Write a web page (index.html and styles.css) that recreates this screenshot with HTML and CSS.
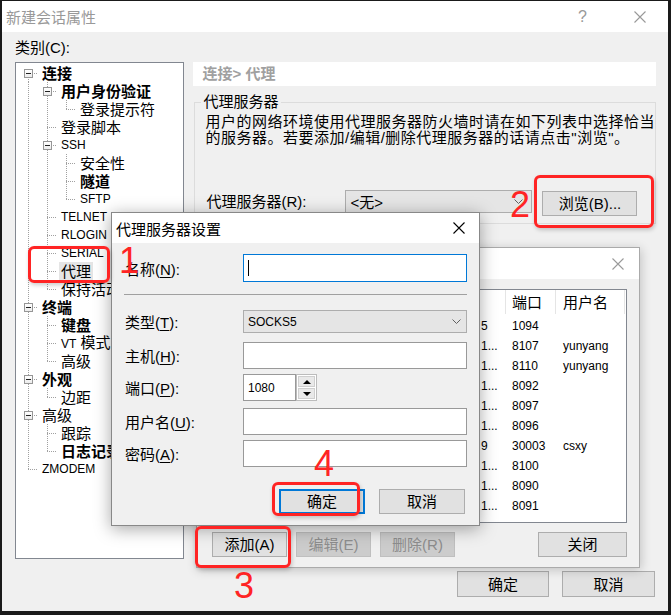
FILE: index.html
```html
<!DOCTYPE html>
<html lang="zh-CN">
<head>
    <meta charset="UTF-8">
    <title>新建会话属性</title>
    <link rel="stylesheet" href="styles.css">
</head>
<body>
    <div class="win">
        <div class="titlebar">
            <span class="title-text">新建会话属性</span>
            <span class="cap">?</span>
            <span class="cap">
                <svg width="12" height="12" viewBox="0 0 12 12"><path d="M0.5 0.5L11.5 11.5M11.5 0.5L0.5 11.5" stroke="#999" stroke-width="1.1" fill="none"/></svg>
            </span>
        </div>
        <div class="win-body">
            <div class="cat-label">类别(C):</div>
            <div class="cols">
                <div class="tree">
                    <div class="node"><span class="g f"><i class="box"></i></span><span class="txt b">连接</span></div>
                    <div class="node"><span class="g v"></span><span class="g t"><i class="box"></i></span><span class="txt b">用户身份验证</span></div>
                    <div class="node"><span class="g v"></span><span class="g v"></span><span class="g l"></span><span class="txt">登录提示符</span></div>
                    <div class="node"><span class="g v"></span><span class="g t"></span><span class="txt">登录脚本</span></div>
                    <div class="node"><span class="g v"></span><span class="g t"><i class="box"></i></span><span class="txt en">SSH</span></div>
                    <div class="node"><span class="g v"></span><span class="g v"></span><span class="g t"></span><span class="txt">安全性</span></div>
                    <div class="node"><span class="g v"></span><span class="g v"></span><span class="g t"></span><span class="txt b">隧道</span></div>
                    <div class="node"><span class="g v"></span><span class="g v"></span><span class="g l"></span><span class="txt en">SFTP</span></div>
                    <div class="node"><span class="g v"></span><span class="g t"></span><span class="txt en">TELNET</span></div>
                    <div class="node"><span class="g v"></span><span class="g t"></span><span class="txt en">RLOGIN</span></div>
                    <div class="node"><span class="g v"></span><span class="g t"></span><span class="txt en">SERIAL</span></div>
                    <div class="node"><span class="g v"></span><span class="g t"></span><span class="txt sel">代理</span></div>
                    <div class="node"><span class="g v"></span><span class="g l"></span><span class="txt">保持活动</span></div>
                    <div class="node"><span class="g t"><i class="box"></i></span><span class="txt b">终端</span></div>
                    <div class="node"><span class="g v"></span><span class="g t"></span><span class="txt b">键盘</span></div>
                    <div class="node"><span class="g v"></span><span class="g t"></span><span class="txt"><span class="en">VT</span> 模式</span></div>
                    <div class="node"><span class="g v"></span><span class="g l"></span><span class="txt">高级</span></div>
                    <div class="node"><span class="g t"><i class="box"></i></span><span class="txt b">外观</span></div>
                    <div class="node"><span class="g v"></span><span class="g l"></span><span class="txt">边距</span></div>
                    <div class="node"><span class="g t"><i class="box"></i></span><span class="txt">高级</span></div>
                    <div class="node"><span class="g v"></span><span class="g t"></span><span class="txt">跟踪</span></div>
                    <div class="node"><span class="g v"></span><span class="g l"></span><span class="txt b">日志记录</span></div>
                    <div class="node"><span class="g l"></span><span class="txt en">ZMODEM</span></div>
                </div>
                <div class="panel">
                    <div class="crumb">连接&gt; 代理</div>
                    <fieldset class="group">
                        <legend>代理服务器</legend>
                        <p class="desc">用户的网络环境使用代理服务器防火墙时请在如下列表中选择恰当<br>的服务器。若要添加/编辑/删除代理服务器的话请点击"浏览"。</p>
                        <div class="proxy-row">
                            <span class="proxy-label">代理服务器(R):</span>
                            <div class="combo">
                                <span>&lt;无&gt;</span>
                                <svg width="9" height="5" viewBox="0 0 9 5"><path d="M0.5 0.5L4.5 4.5L8.5 0.5" stroke="#606060" fill="none"/></svg>
                            </div>
                            <button class="btn browse">浏览(B)...</button>
                        </div>
                    </fieldset>
                </div>
            </div>
            <div class="win-buttons">
                <button class="btn ok">确定</button>
                <button class="btn cancel">取消</button>
            </div>
        </div>
    </div>

    <!-- proxy list dialog (inactive, behind) -->
    <div class="dlg list-dlg">
        <div class="dlg-title">
            <span class="dlg-title-text">代理服务器列表</span>
            <svg width="12" height="12" viewBox="0 0 12 12"><path d="M0.5 0.5L11.5 11.5M11.5 0.5L0.5 11.5" stroke="#9a9a9a" stroke-width="1.1" fill="none"/></svg>
        </div>
        <div class="list-body">
            <div class="listview">
                <div class="lv-row lv-head">
                    <span>名称</span><span>主机</span><span>端口</span><span>用户名</span><span></span>
                </div>
                <div class="lv-row"><span>proxy-a</span><span><i class="pre">192.168.1.2</i>5</span><span>1094</span><span></span><span></span></div>
                <div class="lv-row"><span>proxy-b</span><span><i class="pre">100.64.10.2</i>1...</span><span>8107</span><span>yunyang</span><span></span></div>
                <div class="lv-row"><span>proxy-c</span><span><i class="pre">100.64.10.2</i>1...</span><span>8110</span><span>yunyang</span><span></span></div>
                <div class="lv-row"><span>proxy-d</span><span><i class="pre">100.64.10.2</i>1...</span><span>8092</span><span></span><span></span></div>
                <div class="lv-row"><span>proxy-e</span><span><i class="pre">100.64.10.2</i>1...</span><span>8097</span><span></span><span></span></div>
                <div class="lv-row"><span>proxy-f</span><span><i class="pre">100.64.10.2</i>1...</span><span>8096</span><span></span><span></span></div>
                <div class="lv-row"><span>proxy-g</span><span><i class="pre">172.16.0.13</i>9</span><span>30003</span><span>csxy</span><span></span></div>
                <div class="lv-row"><span>proxy-h</span><span><i class="pre">100.64.10.2</i>1...</span><span>8100</span><span></span><span></span></div>
                <div class="lv-row"><span>proxy-i</span><span><i class="pre">100.64.10.2</i>1...</span><span>8090</span><span></span><span></span></div>
                <div class="lv-row"><span>proxy-j</span><span><i class="pre">100.64.10.2</i>1...</span><span>8091</span><span></span><span></span></div>
            </div>
            <div class="lv-buttons">
                <button class="btn small">添加(A)</button>
                <button class="btn small" disabled>编辑(E)</button>
                <button class="btn small" disabled>删除(R)</button>
                <button class="btn close">关闭</button>
            </div>
        </div>
    </div>

    <!-- proxy settings dialog (active, front) -->
    <div class="dlg proxy-dlg">
        <div class="dlg-title active">
            <span class="dlg-title-text">代理服务器设置</span>
            <svg width="12" height="12" viewBox="0 0 12 12"><path d="M0.5 0.5L11.5 11.5M11.5 0.5L0.5 11.5" stroke="#000" stroke-width="1.1" fill="none"/></svg>
        </div>
        <div class="form">
            <div class="f-row">
                <label>名称(<u>N</u>):</label>
                <div class="field focus"><span class="caret"></span></div>
            </div>
            <div class="sep"></div>
            <div class="f-row type-row">
                <label>类型(<u>T</u>):</label>
                <div class="select">
                    <span class="en">SOCKS5</span>
                    <svg width="9" height="5" viewBox="0 0 9 5"><path d="M0.5 0.5L4.5 4.5L8.5 0.5" stroke="#606060" fill="none"/></svg>
                </div>
            </div>
            <div class="f-row host-row">
                <label>主机(<u>H</u>):</label>
                <div class="field"></div>
            </div>
            <div class="f-row port-row">
                <label>端口(<u>P</u>):</label>
                <div class="field port"><span class="en">1080</span></div>
                <div class="spin"><span><i class="up"></i></span><span><i class="down"></i></span></div>
            </div>
            <div class="f-row user-row">
                <label>用户名(<u>U</u>):</label>
                <div class="field"></div>
            </div>
            <div class="f-row pass-row">
                <label>密码(<u>A</u>):</label>
                <div class="field"></div>
            </div>
            <div class="f-buttons">
                <button class="btn dlg-btn default">确定</button>
                <button class="btn dlg-btn">取消</button>
            </div>
        </div>
    </div>

    <!-- red step annotations -->
    <div class="mark m1"></div>
    <div class="mark m2"></div>
    <div class="mark m3"></div>
    <div class="mark m4"></div>
    <span class="num n1">1</span>
    <span class="num n2">2</span>
    <span class="num n3">3</span>
    <span class="num n4">4</span>
</body>
</html>
```

FILE: styles.css
```css
body {
    margin: 0;
    padding: 1px 0 0 2px;
    box-sizing: border-box;
    width: 671px;
    height: 615px;
    position: relative;
    overflow: hidden;
    background: #1a1a1a;
    font-family: "Liberation Sans", "Noto Sans CJK SC", sans-serif;
    font-size: 15px;
    color: #000;
}
u {
    text-underline-offset: 2px;
}
.en {
    font-size: 12px;
}

/* main window */
.win {
    width: 666px;
    height: 610px;
    background: #f0f0f0;
    display: flex;
    flex-direction: column;
}
.titlebar {
    height: 31px;
    background: #fff;
    display: flex;
    align-items: center;
    flex: none;
}
.title-text {
    flex: 1;
    padding-left: 4px;
    color: #999;
}
.cap {
    width: 57px;
    height: 31px;
    display: flex;
    align-items: center;
    justify-content: center;
    color: #999;
    font-size: 16px;
}
.win-body {
    padding: 0 12px 0 13px;
}
.cat-label {
    margin-top: 8px;
    line-height: 16px;
}
.cols {
    display: flex;
    gap: 9px;
    margin-top: 6px;
}

/* tree */
.tree {
    width: 170px;
    height: 497px;
    box-sizing: border-box;
    border: 1px solid #828790;
    background: #fff;
    padding: 1px 0 0 3px;
    overflow: hidden;
}
.node {
    display: flex;
    align-items: center;
    height: 18px;
    white-space: nowrap;
}
.g {
    width: 19px;
    height: 18px;
    flex: none;
    display: flex;
    align-items: center;
    justify-content: center;
    background-repeat: no-repeat;
    --dv: repeating-linear-gradient(#a0a0a0 0 1px, transparent 1px 2px);
    --dh: repeating-linear-gradient(90deg, #a0a0a0 0 1px, transparent 1px 2px);
}
.g.v {
    background-image: var(--dv);
    background-size: 1px 18px;
    background-position: 9px 0;
}
.g.t {
    background-image: var(--dv), var(--dh);
    background-size: 1px 18px, 10px 1px;
    background-position: 9px 0, 9px 9px;
}
.g.l {
    background-image: var(--dv), var(--dh);
    background-size: 1px 9px, 10px 1px;
    background-position: 9px 0, 9px 9px;
}
.g.f {
    background-image: var(--dv), var(--dh);
    background-size: 1px 9px, 10px 1px;
    background-position: 9px 9px, 9px 9px;
}
.box {
    width: 9px;
    height: 9px;
    box-sizing: border-box;
    border: 1px solid #969696;
    background: linear-gradient(#fff, #ececec);
    position: relative;
}
.box::after {
    content: "";
    position: absolute;
    left: 1px;
    top: 3px;
    width: 5px;
    height: 1px;
    background: #222;
}
.txt {
    margin-left: 2px;
    padding: 0 2px;
    line-height: 19px;
}
.txt.b {
    font-weight: bold;
}
.txt.sel {
    background: #e5e5e5;
}

/* right panel */
.panel {
    flex: 1;
}
.crumb {
    height: 24px;
    line-height: 24px;
    background: #fff;
    padding-left: 9px;
    color: #a0a0a0;
    font-weight: bold;
}
.group {
    margin: 8px 0 0 1px;
    padding: 4px 0 7px 6px;
    border: 1px solid #dcdcdc;
    min-width: 0;
}
.group legend {
    padding: 0 2px;
    line-height: 16px;
}
.desc {
    margin: 0 0 0 4px;
    line-height: 16px;
    letter-spacing: 0.5px;
    white-space: nowrap;
}
.proxy-row {
    display: flex;
    align-items: flex-start;
    margin: 44px 0 0 5px;
}
.proxy-label {
    width: 139px;
    line-height: 23px;
}
.combo {
    width: 187px;
    height: 23px;
    box-sizing: border-box;
    border: 1px solid #adadad;
    background: #e5e5e5;
    display: flex;
    align-items: center;
    justify-content: space-between;
    padding: 0 8px 0 4px;
}

/* buttons */
.btn {
    box-sizing: border-box;
    height: 25px;
    padding: 0;
    border: 1px solid #adadad;
    background: #e1e1e1;
    font: inherit;
    color: #000;
    line-height: 21px;
}
.btn:disabled {
    background: #cccccc;
    border-color: #bfbfbf;
    color: #8d8d8d;
}
.browse {
    width: 95px;
    margin: 1px 0 0 10px;
}
.win-buttons {
    display: flex;
    justify-content: flex-end;
    gap: 13px;
    margin: 12px 1px 0 0;
}
.win-buttons .btn {
    height: 26px;
}
.ok {
    width: 92px;
}
.cancel {
    width: 93px;
}

/* dialogs */
.dlg {
    position: absolute;
    box-sizing: border-box;
    background: #f0f0f0;
    display: flex;
    flex-direction: column;
}
.dlg-title {
    height: 31px;
    flex: none;
    background: #fff;
    display: flex;
    align-items: center;
    justify-content: space-between;
    padding: 0 15px 0 4px;
}
.list-dlg .dlg-title-text {
    color: #999;
}
.list-dlg {
    left: 196px;
    top: 247px;
    width: 444px;
    height: 321px;
    border: 1px solid #aaa;
    box-shadow: 1px 2px 10px rgba(0, 0, 0, 0.2);
}
.list-body {
    padding: 10px 12px 0 6px;
}
.listview {
    height: 234px;
    box-sizing: border-box;
    border: 1px solid #828790;
    background: #fff;
    overflow: hidden;
}
.lv-row {
    display: grid;
    grid-template-columns: 196px 106px 50px 69px 1fr;
    height: 20px;
    line-height: 20px;
    font-size: 12px;
    white-space: nowrap;
}
.lv-row span {
    padding-left: 6px;
    overflow: hidden;
}
.lv-row span:nth-child(4) {
    padding-left: 7px;
}
.lv-head {
    height: 26px;
    line-height: 26px;
    font-size: 15px;
}
.lv-head span {
    border-right: 1px solid #e5e5e5;
    height: 24px;
}
.lv-head span:last-child {
    border-right: 0;
}
.pre {
    display: inline-block;
    width: 75px;
    overflow: hidden;
    font-style: normal;
    vertical-align: top;
}
.lv-buttons {
    display: flex;
    gap: 9px;
    margin: 9px 0 0 9px;
}
.small {
    width: 75px;
}
.lv-buttons .close {
    width: 89px;
    margin-left: auto;
}

.proxy-dlg {
    left: 111px;
    top: 212px;
    width: 369px;
    height: 314px;
    border: 1px solid #888;
    box-shadow: 0 3px 16px rgba(0, 0, 0, 0.35);
}
.proxy-dlg .dlg-title {
    height: 30px;
    padding-right: 14px;
}
.form {
    padding: 11px 12px 0 13px;
}
.f-row {
    display: flex;
    align-items: center;
}
.f-row label {
    width: 118px;
}
.field {
    width: 224px;
    height: 27px;
    box-sizing: border-box;
    border: 1px solid #999;
    background: #fff;
    display: flex;
    align-items: center;
    padding-left: 4px;
}
.field.focus {
    height: 28px;
    border-color: #0078d7;
}
.caret {
    width: 1px;
    height: 16px;
    background: #000;
}
.sep {
    margin: 12px 0 0 -1px;
    width: 343px;
    border-top: 1px solid #a0a0a0;
}
.type-row {
    margin-top: 15px;
}
.select {
    width: 224px;
    height: 23px;
    box-sizing: border-box;
    border: 1px solid #adadad;
    background: #e5e5e5;
    display: flex;
    align-items: center;
    justify-content: space-between;
    padding: 0 5px 0 4px;
}
.host-row {
    margin-top: 9px;
}
.port-row {
    margin-top: 5px;
}
.field.port {
    width: 53px;
}
.spin {
    width: 21px;
    height: 27px;
    box-sizing: border-box;
    border: 1px solid #bcbcbc;
    background: #fff;
    padding: 1px;
    display: flex;
    flex-direction: column;
    gap: 1px;
}
.spin span {
    flex: 1;
    background: #e9e9e9;
    border: 1px solid #cfcfcf;
    display: flex;
    align-items: center;
    justify-content: center;
}
.spin .up {
    border: 4px solid transparent;
    border-top: 0;
    border-bottom: 4px solid #000;
}
.spin .down {
    border: 4px solid transparent;
    border-bottom: 0;
    border-top: 4px solid #000;
}
.user-row {
    margin-top: 7px;
}
.pass-row {
    margin-top: 5px;
}
.f-buttons {
    display: flex;
    gap: 14px;
    margin: 22px 0 0 154px;
}
.dlg-btn {
    width: 86px;
}
.default {
    border: 2px solid #0078d7;
}

/* red annotations */
.mark {
    position: absolute;
    box-sizing: border-box;
    border: 3px solid #ff2424;
    border-radius: 6px;
    box-shadow: 1px 2px 4px rgba(0, 0, 0, 0.2);
}
.m1 { left: 28px; top: 246px; width: 82px; height: 37px; }
.m2 { left: 534px; top: 175px; width: 120px; height: 53px; }
.m3 { left: 195px; top: 526px; width: 96px; height: 42px; }
.m4 { left: 272px; top: 482px; width: 88px; height: 34px; }
.num {
    position: absolute;
    font-family: "Liberation Sans", sans-serif;
    font-size: 36px;
    line-height: 1;
    color: #ff2424;
}
.n1 { left: 119px; top: 243px; }
.n2 { left: 510px; top: 187px; }
.n3 { left: 234px; top: 568px; }
.n4 { left: 314px; top: 446px; }
```
